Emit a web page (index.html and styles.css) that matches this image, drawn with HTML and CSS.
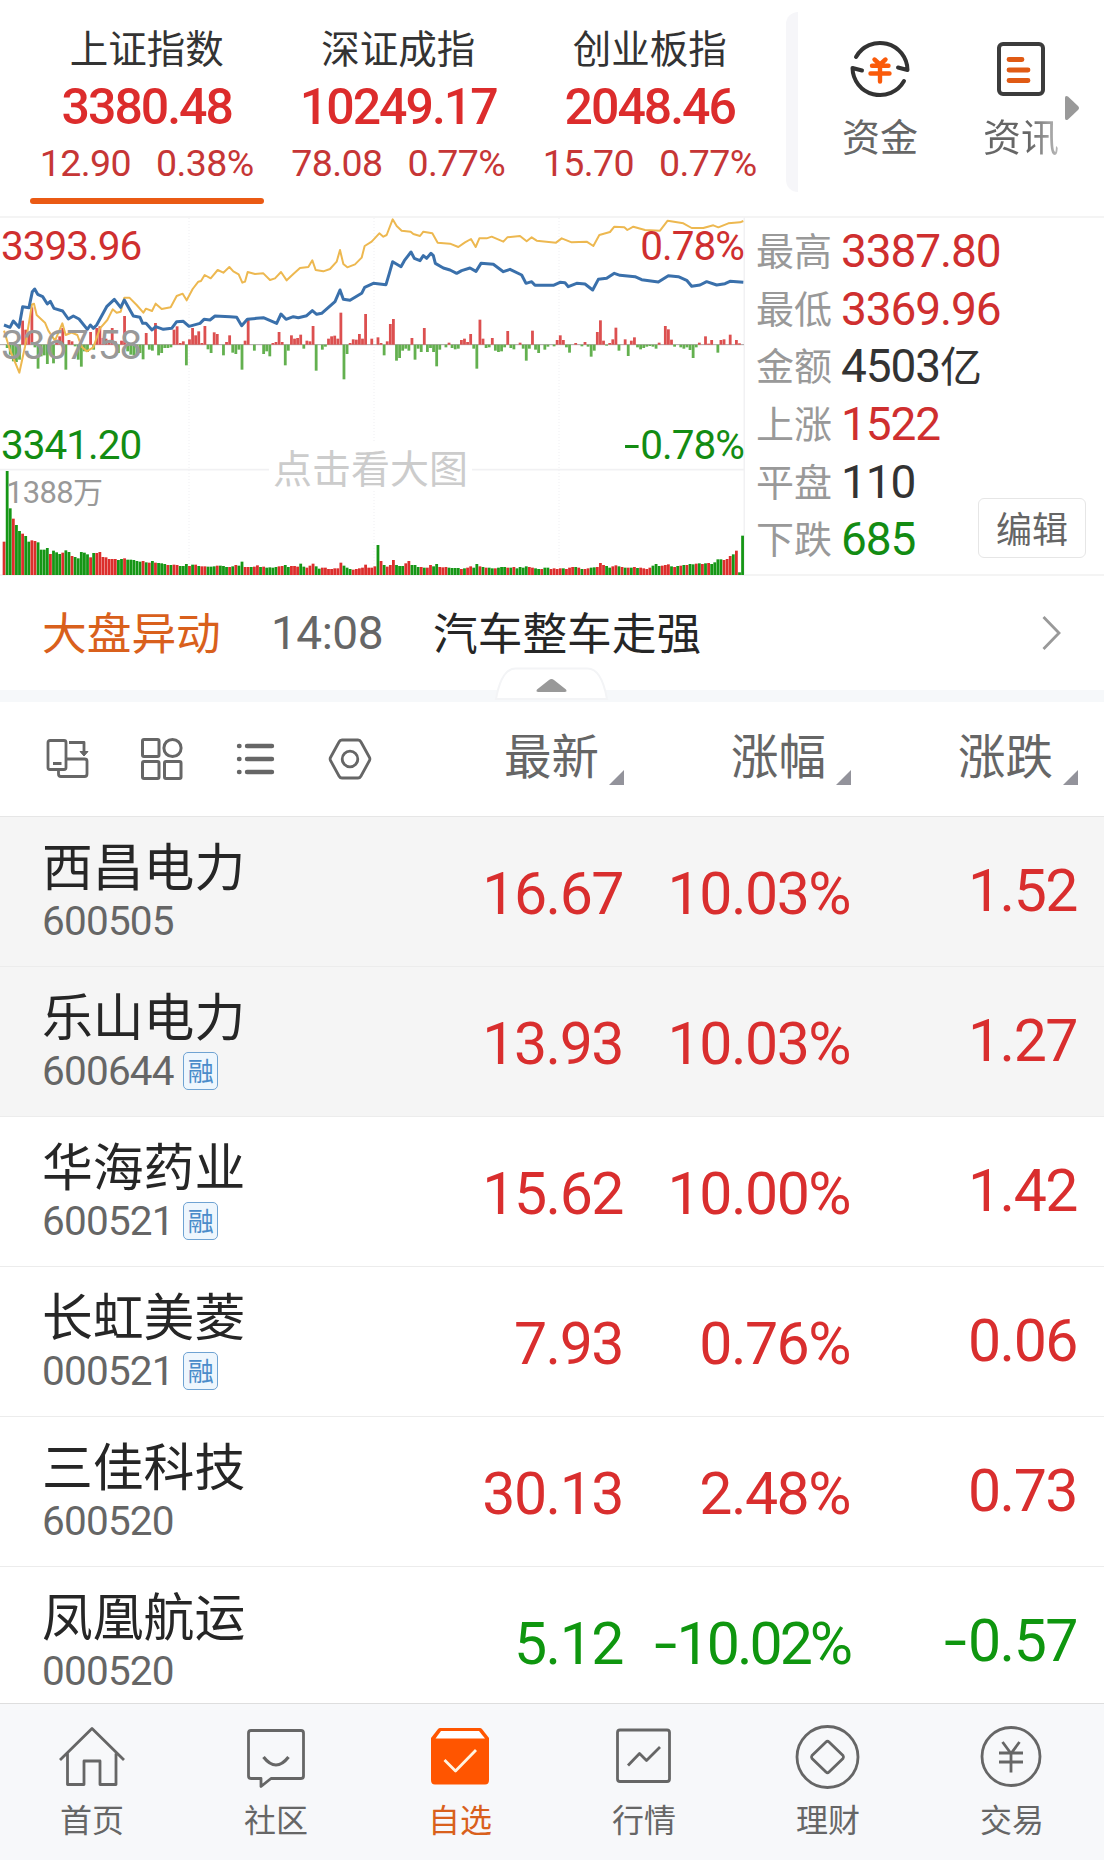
FILE: index.html
```html
<!DOCTYPE html>
<html lang="zh-CN">
<head>
    <meta charset="UTF-8">
    <title>自选</title>
    <link rel="stylesheet" href="styles.css">
</head>
<body>
<div class="app">
    <div class="top">
        <ul class="index">
            <li class="on">
                <h3>上证指数</h3>
                <b>3380.48</b>
                <p><span>12.90</span><span>0.38%</span></p>
            </li>
            <li>
                <h3>深证成指</h3>
                <b>10249.17</b>
                <p><span>78.08</span><span>0.77%</span></p>
            </li>
            <li>
                <h3>创业板指</h3>
                <b>2048.46</b>
                <p><span>15.70</span><span>0.77%</span></p>
            </li>
        </ul>
        <div class="divide"></div>
        <div class="entry">
            <a class="fund">
                <svg width="60" height="60" viewBox="0 0 60 60" fill="none" stroke="#333" stroke-width="4" stroke-linecap="round" stroke-linejoin="round">
                    <path d="M6 18A27.5 27.5 0 0 1 57.500 31L48 28.500"/>
                    <path d="M54 42A27.500 27.500 0 0 1 2.500 29L12 31.500"/>
                    <path d="M24.500 20.500L30 25.500L35.500 20.500M22 26.800H38.500M20.500 34.500H39.500M30 26V42.500" stroke="#fa5a0a" stroke-width="4.400"/>
                </svg>
                <span>资金</span>
            </a>
            <a class="info">
                <svg width="60" height="60" viewBox="0 0 60 60" fill="none" stroke="#3c3c3c" stroke-width="4" stroke-linecap="round">
                    <rect x="8" y="5" width="44" height="50" rx="4"/>
                    <path d="M18 20.500H31M18 31H37M18 41.500H37" stroke="#e05a14" stroke-width="4.800"/>
                </svg>
                <span>资讯</span>
            </a>
            <svg class="more" width="16" height="26" viewBox="0 0 16 26"><path d="M1 3Q1 0 4 1.500L14 11Q16 13 14 15L4 24.500Q1 26 1 23Z" fill="#999"/></svg>
        </div>
    </div>

    <div class="market">
        <div class="chart">
            <svg width="745" height="359" viewBox="0 21 2235 1077" fill="none">
                <path d="M0 779H2232M2233 21V1098" stroke="#f1f1f3" stroke-width="5"/>
                <path d="M567 24V1095M1122 24V1095M1677 24V1095" stroke="#efeff2" stroke-width="3" stroke-dasharray="3 6"/>
                <path d="M0 404H2232" stroke="#a9a2a2" stroke-width="3"/>
                <g id="power"></g>
                <g id="volume"></g>
                <polyline stroke="#edb850" stroke-width="6" stroke-linejoin="round" points="12,362 30,420 58,488 75,410 96,283 102,281 110,315 135,338 145,362 165,392 187,340 197,375 215,368 232,375 245,410 260,424 280,412 300,355 322,330 338,298 350,308 362,305 373,263 388,263 410,285 430,308 438,296 456,303 467,281 485,297 512,292 530,258 548,251 560,271 578,237 595,215 603,213 614,195 632,205 653,180 670,188 688,171 700,184 716,193 727,218 735,215 743,186 765,192 790,190 810,210 825,205 843,186 860,211 880,192 900,174 925,171 937,151 947,180 970,184 990,177 1010,155 1020,120 1030,162 1042,172 1065,163 1085,143 1094,108 1115,95 1138,70 1150,80 1160,75 1178,28 1190,48 1205,62 1232,65 1240,72 1260,78 1270,65 1297,70 1313,98 1350,101 1375,111 1395,97 1413,87 1427,111 1438,85 1460,85 1475,80 1510,95 1522,82 1560,78 1580,94 1595,82 1610,92 1668,98 1685,85 1715,97 1760,95 1780,108 1798,75 1830,66 1843,50 1873,52 1882,60 1900,50 1935,60 1980,62 2003,32 2050,40 2075,54 2110,54 2140,46 2155,52 2185,40 2220,37 2230,33"/>
                <polyline stroke="#3a70ab" stroke-width="9" stroke-linejoin="round" points="12,345 30,352 40,333 57,352 68,290 87,293 97,245 104,237 113,253 128,260 142,282 151,274 162,295 188,303 205,327 220,318 237,327 262,358 271,345 280,355 290,345 320,290 343,268 362,292 373,270 400,318 420,322 428,340 438,340 456,360 467,350 490,358 515,355 530,335 550,334 567,349 600,340 612,328 630,330 645,318 690,320 710,322 725,347 742,328 770,325 790,323 830,340 843,312 858,328 880,320 895,323 920,317 937,302 950,313 965,310 1005,275 1020,240 1030,268 1050,271 1085,250 1094,232 1120,220 1158,224 1168,190 1178,155 1203,170 1213,152 1233,126 1243,145 1260,152 1270,137 1280,145 1293,130 1300,137 1306,160 1330,174 1350,180 1370,190 1385,182 1410,174 1428,184 1443,160 1480,163 1510,185 1530,178 1565,195 1578,220 1595,215 1605,226 1660,226 1680,217 1695,218 1705,230 1730,220 1755,222 1778,240 1795,208 1820,205 1843,190 1860,196 1905,200 1925,209 1975,216 2005,197 2035,200 2060,211 2075,229 2100,225 2120,215 2150,225 2175,221 2190,214 2230,217"/>
            </svg>
            <span class="tip t1 red">3393.96</span>
            <span class="tip t2">3367.58</span>
            <span class="tip t3 green">3341.20</span>
            <span class="tip t4 red">0.78%</span>
            <span class="tip t5 green"><i class="minus">-</i>0.78%</span>
            <span class="tip t6">1388<em>万</em></span>
            <span class="big">点击看大图</span>
        </div>
        <div class="detail">
            <dl>
                <dt>最高</dt><dd class="red">3387.80</dd>
                <dt>最低</dt><dd class="red">3369.96</dd>
                <dt>金额</dt><dd>4503<em>亿</em></dd>
                <dt>上涨</dt><dd class="red">1522</dd>
                <dt>平盘</dt><dd>110</dd>
                <dt>下跌</dt><dd class="green">685</dd>
            </dl>
            <a class="edit">编辑</a>
        </div>
    </div>

    <div class="news">
        <strong>大盘异动</strong>
        <time>14:08</time>
        <p>汽车整车走强</p>
        <svg width="20" height="36" viewBox="0 0 20 36" fill="none" stroke="#999" stroke-width="2.800"><path d="M1.500 2L17 18L1.500 34"/></svg>
    </div>
    <div class="band">
        <svg class="fold" width="115" height="34" viewBox="0 0 114 34"><path d="M1.500 32Q7 1.500 21 1.500H93Q107 1.500 112.500 32Z" fill="#fff" stroke="#f3f4f6" stroke-width="2"/><path d="M42.500 22.500L54.500 13Q57 11 59.500 13L71.500 22.500Q73 25 70 25H44Q41 25 42.500 22.500Z" fill="#999"/></svg>
    </div>

    <div class="thead">
        <div class="tools">
            <svg width="44" height="44" viewBox="0 0 44 44" fill="none" stroke="#666" stroke-width="2.800" stroke-linejoin="round">
                <rect x="2" y="3.500" width="18" height="29" rx="2"/>
                <path d="M7 26.500H15.500M23 5.500H38V17M12.500 33V37Q12.500 39.500 15 39.500H38.500Q41 39.500 41 37V24Q41 22 38.500 22H20.500"/>
                <path d="M34 14.500H42L38 19Z" fill="#666" stroke-width="1"/>
            </svg>
            <svg width="44" height="44" viewBox="0 0 44 44" fill="none" stroke="#666" stroke-width="3">
                <rect x="2.500" y="2.500" width="16.500" height="17" rx="1.500"/>
                <circle cx="32.500" cy="11" r="8.600"/>
                <rect x="2.500" y="24.500" width="16.500" height="17" rx="1.500"/>
                <rect x="24.500" y="24.500" width="16.500" height="17" rx="1.500"/>
            </svg>
            <svg width="44" height="44" viewBox="0 0 44 44" fill="none" stroke="#666" stroke-width="4.400" stroke-linecap="round">
                <path d="M13 9H38M13 22H38M13 35H38M5 9H5.500M5 22H5.500M5 35H5.500"/>
            </svg>
            <svg width="44" height="44" viewBox="0 0 44 44" fill="none" stroke="#666" stroke-width="2.800" stroke-linejoin="round">
                <path d="M14 3H30Q32 3 33 5L41.500 20.500Q42.300 22 41.500 23.500L33 39Q32 41 30 41H14Q12 41 11 39L2.500 23.500Q1.700 22 2.500 20.500L11 5Q12 3 14 3Z"/>
                <circle cx="22" cy="22" r="7.800"/>
            </svg>
        </div>
        <div class="sort">最新</div>
        <div class="sort">涨幅</div>
        <div class="sort">涨跌</div>
    </div>

    <ul class="list">
        <li class="top-row">
            <div class="stock"><h4>西昌电力</h4><p>600505</p></div>
            <span class="num">16.67</span><span class="num">10.03%</span><span class="num diff">1.52</span>
        </li>
        <li class="top-row">
            <div class="stock"><h4>乐山电力</h4><p>600644<i class="rong">融</i></p></div>
            <span class="num">13.93</span><span class="num">10.03%</span><span class="num diff">1.27</span>
        </li>
        <li>
            <div class="stock"><h4>华海药业</h4><p>600521<i class="rong">融</i></p></div>
            <span class="num">15.62</span><span class="num">10.00%</span><span class="num diff">1.42</span>
        </li>
        <li>
            <div class="stock"><h4>长虹美菱</h4><p>000521<i class="rong">融</i></p></div>
            <span class="num">7.93</span><span class="num">0.76%</span><span class="num diff">0.06</span>
        </li>
        <li>
            <div class="stock"><h4>三佳科技</h4><p>600520</p></div>
            <span class="num">30.13</span><span class="num">2.48%</span><span class="num diff">0.73</span>
        </li>
        <li class="down">
            <div class="stock"><h4>凤凰航运</h4><p>000520</p></div>
            <span class="num">5.12</span><span class="num long"><i class="minus">-</i>10.02%</span><span class="num diff"><i class="minus">-</i>0.57</span>
        </li>
    </ul>

    <div class="nav">
        <a>
            <svg width="66" height="66" viewBox="0 0 66 66" fill="none" stroke="#666" stroke-width="2.800" stroke-linejoin="round">
                <path d="M1 36L33 4.500L65 36M8.500 29.500V60.500H25V37H41V60.500H57V29.500"/>
            </svg>
            <span>首页</span>
        </a>
        <a>
            <svg width="66" height="66" viewBox="0 0 66 66" fill="none" stroke="#666" stroke-width="2.800" stroke-linejoin="round">
                <path d="M8 6.500H58Q60.500 6.500 60.500 9V52Q60.500 54.500 58 54.500H28L18 62.500V54.500H8Q5.500 54.500 5.500 52V9Q5.500 6.500 8 6.500Z"/>
                <path d="M20.500 33Q33 49 45.500 33" stroke-width="3.200"/>
            </svg>
            <span>社区</span>
        </a>
        <a class="on">
            <svg width="66" height="66" viewBox="0 0 66 66" fill="none" stroke-linejoin="round">
                <path d="M13 4H53Q54 4 55 5L62 14V56Q62 60.500 58 60.500H8Q4 60.500 4 56V14L11 5Q12 4 13 4Z" fill="#ff5500"/>
                <path d="M14 7H52L58 14.500H8.500Z" fill="#fff"/>
                <path d="M17.500 36L28.500 47L49 26" stroke="#fff3e0" stroke-width="2.800"/>
            </svg>
            <span>自选</span>
        </a>
        <a>
            <svg width="66" height="66" viewBox="0 0 66 66" fill="none" stroke="#666" stroke-width="2.800" stroke-linejoin="round">
                <rect x="6.500" y="6" width="52" height="51.500" rx="2.500"/>
                <path d="M17 41.500L28.500 29.500L35.500 36.500L49 23"/>
            </svg>
            <span>行情</span>
        </a>
        <a>
            <svg width="66" height="66" viewBox="0 0 66 66" fill="none" stroke="#666" stroke-width="2.800" stroke-linejoin="round">
                <circle cx="32.500" cy="33" r="30.500"/>
                <path d="M31 18Q32.500 16.500 34 18L48 31.500Q49 33 48 34.500L34 48Q32.500 49.500 31 48L17 34.500Q16 33 17 31.500Z"/>
            </svg>
            <span>理财</span>
        </a>
        <a>
            <svg width="66" height="66" viewBox="0 0 66 66" fill="none" stroke="#666" stroke-width="2.800">
                <circle cx="32" cy="32.500" r="29"/>
                <path d="M23.500 18L32 29.500L40.500 18M20 29H44M20 38H44M32 29V48.500"/>
            </svg>
            <span>交易</span>
        </a>
    </div>
</div>
<script src="chart.js"></script>
</body>
</html>
```
FILE: styles.css
```css
*{
    margin: 0;
    padding: 0;
    box-sizing: border-box;
}
ul{
    list-style: none;
}
i,em{
    font-style: normal;
}
svg{
    display: block;
    flex: none;
}
body{
    width: 1104px;
    height: 1860px;
    overflow: hidden;
    background: #fff;
    color: #333;
    font-family: "Noto Sans CJK SC", sans-serif;
}
.app{
    height: 1860px;
    display: flex;
    flex-direction: column;
}
.red{
    color: #cf2f2f;
}
.green{
    color: #138c13;
}
/* 指数 */
.top{
    height: 216px;
    flex: none;
    display: flex;
}
.index{
    width: 786px;
    padding-left: 21px;
    display: flex;
}
.index li{
    width: 251.500px;
    padding-top: 19px;
    display: flex;
    flex-direction: column;
    align-items: center;
    white-space: nowrap;
}
.index h3{
    font-weight: 400;
    font-size: 38.500px;
    line-height: 54px;
}
.index b{
    font: 500 50px/60px Roboto, sans-serif;
    letter-spacing: -2px;
    color: #dc2c2c;
    margin-top: 4px;
}
.index p{
    font: 37.500px/44px Roboto, sans-serif;
    letter-spacing: -.600px;
    color: #c63636;
    display: flex;
    gap: 25px;
    margin-top: 4px;
}
.index .on:after{
    content: "";
    width: 234px;
    height: 6px;
    margin-top: 13px;
    border-radius: 3px;
    background: #ea5a14;
}
.divide{
    width: 12px;
    height: 180px;
    margin-top: 12px;
    border-radius: 12px 0 0 12px;
    background: #f6f6f9;
}
.entry{
    flex: 1;
    position: relative;
    padding: 39px 0 0 44px;
    display: flex;
    gap: 65px;
}
.entry a{
    width: 76px;
    display: flex;
    flex-direction: column;
    align-items: center;
    font-size: 38px;
    line-height: 50px;
    color: #666;
}
.entry span{
    margin-top: 11px;
}
.info span{
    background: linear-gradient(90deg, #666 60%, #bbb);
    -webkit-background-clip: text;
    color: transparent;
}
.more{
    position: absolute;
    left: 266px;
    top: 95px;
}
/* 分时图 */
.market{
    height: 360px;
    flex: none;
    display: flex;
    border-top: 2px solid #f4f4f4;
    border-bottom: 2px solid #f4f4f4;
}
.chart{
    width: 745px;
    position: relative;
    margin-top: -1px;
}
.tip{
    position: absolute;
    left: 1px;
    font: 40.500px/48px Roboto, sans-serif;
    letter-spacing: -1px;
}
.t1,.t4{
    top: 5px;
}
.t2{
    top: 104px;
    color: #999;
}
.t3,.t5{
    top: 204px;
}
.t4,.t5{
    left: auto;
    right: 1px;
}
.t6{
    left: 6px;
    top: 251px;
    font-size: 31px;
    letter-spacing: -.700px;
    color: #999;
}
.t6 em{
    font: 30px "Noto Sans CJK SC", sans-serif;
}
.big{
    position: absolute;
    left: 269px;
    top: 224px;
    width: 203px;
    text-align: center;
    background: #fff;
    font-size: 39px;
    line-height: 50px;
    color: #ccc;
}
.minus{
    display: inline-block;
    transform: scaleX(1.400);
    margin-right: .1em;
}
.detail{
    flex: 1;
    position: relative;
    padding: 4px 0 0 11px;
}
.detail dl{
    display: grid;
    grid-template-columns: 85px 1fr;
    grid-auto-rows: 57.700px;
    align-items: center;
}
.detail dt{
    padding-bottom: 4px;
    font-size: 38px;
    line-height: 52px;
    color: #999;
}
.detail dd{
    font: 46px/56px Roboto, sans-serif;
    letter-spacing: -1.100px;
}
.detail dd em{
    font: 42px/50px "Noto Sans CJK SC", sans-serif;
}
.edit{
    position: absolute;
    right: 18px;
    top: 280px;
    width: 108px;
    height: 60px;
    border: 1px solid #e6e6e6;
    border-radius: 6px;
    font-size: 36px;
    line-height: 56px;
    text-align: center;
    color: #666;
}
/* 大盘异动 */
.news{
    height: 114px;
    flex: none;
    display: flex;
    align-items: center;
    padding: 0 42px 0 42px;
    font-size: 44.700px;
}
.news strong{
    width: 229px;
    padding-bottom: 5px;
    font-weight: 400;
    color: #d9601c;
}
.news time{
    width: 162px;
    font: 46px/60px Roboto, sans-serif;
    letter-spacing: -.500px;
    color: #666;
}
.news p{
    flex: 1;
    padding-bottom: 5px;
    color: #262626;
}
.band{
    height: 12px;
    flex: none;
    position: relative;
    background: #f6f8fa;
}
.fold{
    position: absolute;
    left: 494px;
    top: -23px;
}
/* 列表 */
.thead{
    height: 115px;
    flex: none;
    display: flex;
    align-items: center;
    padding: 0 26px 0 46px;
    border-bottom: 1px solid #e6e6e6;
}
.tools{
    flex: 1;
    display: flex;
    gap: 50px;
}
.sort{
    width: 227px;
    position: relative;
    margin-bottom: 10px;
    padding-right: 25px;
    text-align: right;
    font-size: 47.500px;
    line-height: 64px;
    color: #666;
}
.sort:after{
    content: "";
    position: absolute;
    right: 0;
    bottom: 1px;
    border-left: 15px solid transparent;
    border-bottom: 15px solid #93939b;
}
.list{
    flex: 1;
    overflow: hidden;
}
.list li{
    height: 150px;
    display: flex;
    align-items: center;
    padding: 0 27px 0 42px;
    border-bottom: 1px solid #ececec;
    color: #d92e2e;
}
.list .top-row{
    background: #f5f5f5;
}
.list .down{
    color: #0f960f;
}
.stock{
    width: 354px;
    padding-bottom: 6px;
}
.stock h4{
    margin-bottom: 4px;
    font-weight: 400;
    font-size: 50.800px;
    line-height: 60px;
    color: #262626;
}
.stock p{
    display: flex;
    align-items: center;
    font: 40.500px/46px Roboto, sans-serif;
    letter-spacing: -.800px;
    color: #666;
}
.rong{
    width: 35px;
    height: 38px;
    margin-left: 9px;
    border: 1.500px solid #6fa3d3;
    border-radius: 5px;
    background: #eef6fd;
    font: 26px/33px "Noto Sans CJK SC", sans-serif;
    text-align: center;
    color: #4a8cca;
}
.num{
    width: 227px;
    padding-top: 4px;
    text-align: right;
    white-space: nowrap;
    font: 59px/70px Roboto, sans-serif;
    letter-spacing: -1.500px;
}
.long{
    letter-spacing: -3px;
}
.diff{
    padding: 0 0 1px;
}
/* 底部导航 */
.nav{
    height: 157px;
    flex: none;
    display: flex;
    border-top: 1px solid #dedede;
    background: #f7f8fa;
}
.nav a{
    width: 184px;
    padding-top: 20px;
    display: flex;
    flex-direction: column;
    align-items: center;
    font-size: 32px;
    line-height: 44px;
    color: #666;
}
.nav span{
    margin-top: 6px;
}
.nav .on{
    color: #d9601c;
}
```
FILE: chart.js
```javascript
// 正数红柱，负数绿柱
var power = [
    0,-10,-30,-50,-52,-45,72,45,35,112,-8,-72,-35,-32,-58,-28,-56,15,25,50,
    -75,14,10,-5,-45,-66,-20,-22,38,-15,50,55,20,18,12,50,10,-25,12,86,
    -20,-30,-32,-28,-25,-44,35,-15,-18,65,-32,-25,-10,-10,-8,45,55,5,10,-62,
    16,50,28,40,5,56,-14,-25,37,32,0,-32,8,28,-24,-28,-15,-75,12,77,
    0,-18,0,0,-28,-20,-35,5,8,38,8,-62,-18,28,18,20,30,-12,12,10,
    56,-78,0,-15,-6,18,25,27,18,96,-104,-28,5,16,15,32,18,92,0,18,
    0,22,5,-32,10,62,77,-48,-40,-18,-12,-18,20,-45,-12,-22,50,-22,-10,-22,
    -65,-15,0,-8,6,-10,-14,-12,14,18,8,32,-12,-72,75,18,-10,-8,20,-18,
    -22,-20,-8,41,-10,-14,0,6,-12,-48,-12,42,-15,-25,0,-15,-6,0,-5,14,
    28,14,-8,-24,0,5,0,-5,8,-6,-36,-18,38,73,12,-3,5,16,51,-18,
    0,16,-34,12,22,-8,-14,-10,-6,-4,-6,-12,6,0,56,46,15,-6,0,-8,
    -12,-8,-16,-40,-8,6,0,25,3,14,0,-24,14,16,0,30,0,14,4,0
];
var volume = [
    100,-312,-200,169,-150,-132,124,-117,-100,104,102,-98,-76,-76,-81,63,-73,-68,-63,67,
    -74,-69,57,-54,-50,-69,-67,-62,53,-66,66,69,54,53,48,48,48,-45,-48,50,
    -46,-46,-45,-42,-40,42,-38,37,-42,37,-36,-35,-33,30,-30,31,30,-27,-27,-33,
    27,-31,31,-27,26,26,-25,-25,-26,28,-28,-27,-24,24,-26,30,-28,-40,24,24,
    -24,25,29,-24,25,-22,-23,-22,-24,26,27,-30,-24,27,27,25,-34,-25,22,28,
    34,-26,-19,22,22,18,18,20,20,37,-28,-22,-18,16,18,20,22,31,22,22,
    26,-90,42,-30,25,30,45,-30,-27,-27,35,42,-30,-30,-24,24,-22,22,30,-26,
    -33,24,23,24,-22,-21,-21,-21,18,-20,22,26,-22,-33,26,-24,22,-22,-20,20,
    -22,-24,-24,22,-22,24,-20,-24,-22,-26,24,22,-20,-18,18,-22,-22,18,20,18,
    20,-20,18,22,24,-24,22,-18,18,20,-22,-23,24,36,30,-27,-22,26,29,-26,
    24,-22,22,-22,24,-21,22,20,18,22,-28,-33,-27,28,30,32,-26,24,-27,28,
    -30,30,-33,-32,34,-35,33,-35,36,-33,-38,-47,-47,45,48,57,-62,73,-8,-118
];

function draw(id, data, base, up, down) {
    var html = "";
    for (var i = 0; i < data.length; i++) {
        var n = data[i];
        if (n == 0) continue;
        var h = Math.abs(n);
        // 成交量全部向上画，强弱柱以中线为界
        var y = (n > 0 || id == "volume") ? base - h : base;
        html += '<rect x="' + (8 + i * 9.27).toFixed(1) + '" y="' + y + '" width="8.4" height="' + h + '" fill="' + (n > 0 ? up : down) + '"/>';
    }
    document.getElementById(id).innerHTML = html;
}
draw("power", power, 404, "#dc5050", "#63b04f");
draw("volume", volume, 1095, "#dc2e2c", "#159615");
```
